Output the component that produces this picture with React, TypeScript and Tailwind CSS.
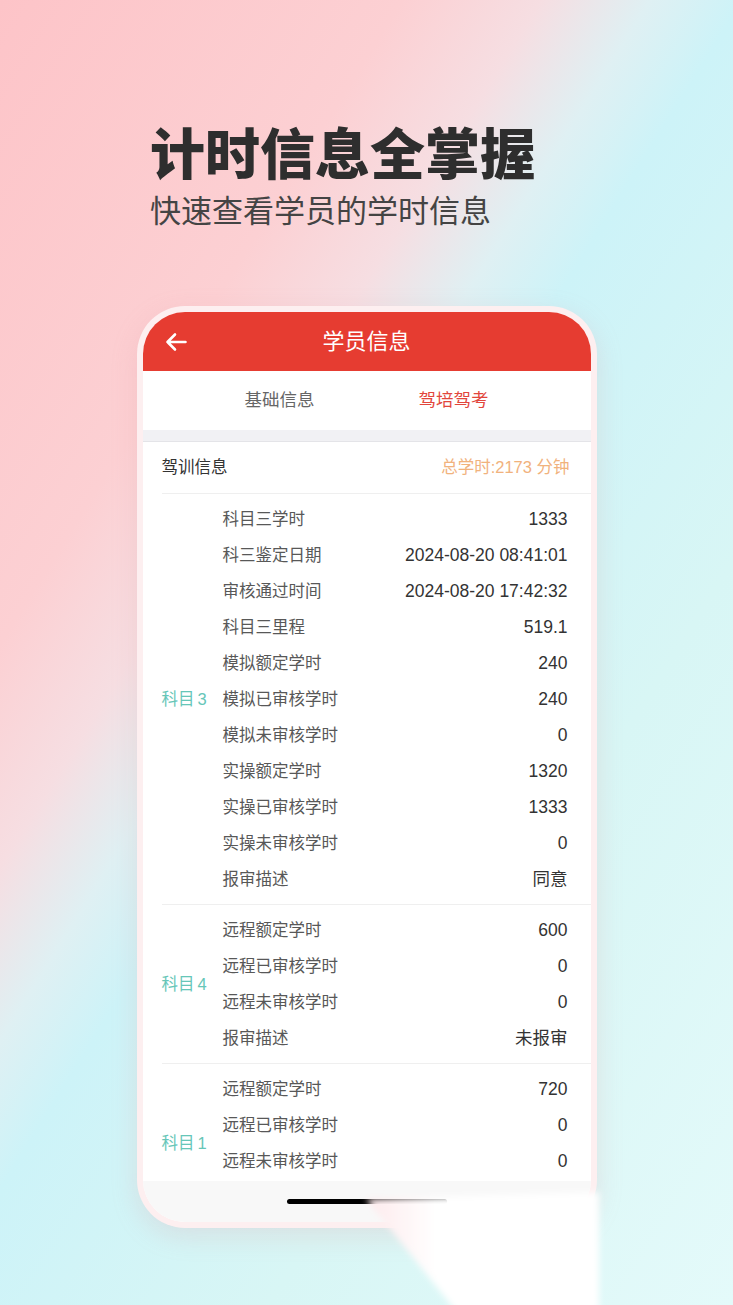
import React from 'react';

type Row = [string, string];

const subject3: Row[] = [
  ['科目三学时', '1333'],
  ['科三鉴定日期', '2024-08-20 08:41:01'],
  ['审核通过时间', '2024-08-20 17:42:32'],
  ['科目三里程', '519.1'],
  ['模拟额定学时', '240'],
  ['模拟已审核学时', '240'],
  ['模拟未审核学时', '0'],
  ['实操额定学时', '1320'],
  ['实操已审核学时', '1333'],
  ['实操未审核学时', '0'],
  ['报审描述', '同意'],
];

const subject4: Row[] = [
  ['远程额定学时', '600'],
  ['远程已审核学时', '0'],
  ['远程未审核学时', '0'],
  ['报审描述', '未报审'],
];

const subject1: Row[] = [
  ['远程额定学时', '720'],
  ['远程已审核学时', '0'],
  ['远程未审核学时', '0'],
];

const Section: React.FC<{ num: string; rows: Row[]; pad?: boolean }> = ({ num, rows, pad }) => (
  <div className="flex border-b border-[#efefef] py-[7px]">
    <div className="flex w-[61px] shrink-0 items-center text-[#66c6b8]">
      科目<span className="ml-[3px]">{num}</span>
    </div>
    <div className="flex-1 pr-[23px]">
      {rows.map(([k, v], i) => (
        <div key={i} className="flex h-[36px] items-center justify-between">
          <span className="text-[#585858]">{k}</span>
          <span className="text-[17.5px] text-[#333]">{v}</span>
        </div>
      ))}
      {pad && <div className="h-[36px]" />}
    </div>
  </div>
);

const App: React.FC = () => {
  return (
    <div className="relative h-[1305px] w-[733px] overflow-hidden bg-[linear-gradient(122deg,#fdc4c8_0%,#fcd0d3_26%,#f6dee2_35%,#dff0f3_42%,#cdf3f8_48%,#d8f6f5_70%,#e4fafa_100%)] font-['Liberation_Sans','Noto_Sans_CJK_SC',sans-serif]">
      <div className="pl-[150px] pt-[123px] font-['Noto_Sans_CJK_SC',sans-serif]">
        <h1 className="text-[55px] font-black leading-none text-[#2e2e2e]">计时信息全掌握</h1>
        <p className="mt-[15px] text-[31px] leading-none text-[#444]">快速查看学员的学时信息</p>
      </div>

      <div className="mx-auto mt-[82px] w-[460px] rounded-[48px] bg-[#fdeff0] p-[6px] shadow-[0_8px_26px_rgba(225,150,160,0.22)]">
        <div className="overflow-hidden rounded-[42px] bg-white text-[16.5px]">
          <div className="relative flex h-[59px] items-center justify-center bg-[#e63c31]">
            <svg className="absolute left-[22px] top-[20px]" width="22" height="20" viewBox="0 0 22 20" fill="none">
              <path d="M20.5 10H2.5M10 2.5L2.5 10L10 17.5" stroke="white" strokeWidth="2.6" strokeLinecap="round" strokeLinejoin="round" />
            </svg>
            <span className="text-[22px] text-white">学员信息</span>
          </div>

          <div className="grid h-[59px] grid-cols-2 items-center px-[50px] text-center text-[17.5px]">
            <span className="text-[#666]">基础信息</span>
            <span className="text-[#e2463c]">驾培驾考</span>
          </div>

          <div className="h-[12px] border-b border-[#e4e4e8] bg-[#f1f1f4]" />

          <div className="h-[739px] overflow-hidden pl-[19px]">
            <div className="flex h-[52px] items-center justify-between border-b border-[#efefef] pr-[21px]">
              <span className="text-[#333]">驾训信息</span>
              <span className="text-[#f1b27d]">总学时:2173 分钟</span>
            </div>
            <Section num="3" rows={subject3} />
            <Section num="4" rows={subject4} />
            <Section num="1" rows={subject1} pad />
          </div>

          <div className="flex h-[41px] items-center justify-center bg-[#f8f8f8]">
            <div className="h-[5px] w-[160px] rounded-full bg-black" />
          </div>
        </div>
      </div>

      <svg className="pointer-events-none absolute left-0 top-0" width="733" height="1305" viewBox="0 0 733 1305">
        <defs>
          <filter id="soft" x="-20%" y="-20%" width="140%" height="140%">
            <feGaussianBlur stdDeviation="3" />
          </filter>
          <linearGradient id="wedge" x1="0" y1="0" x2="1" y2="0">
            <stop offset="0" stopColor="#fdeaec" />
            <stop offset="0.3" stopColor="#ffffff" />
            <stop offset="1" stopColor="#ffffff" />
          </linearGradient>
        </defs>
        <polygon points="366,1199 599,1192 599,1310 455,1310" fill="url(#wedge)" filter="url(#soft)" />
      </svg>
    </div>
  );
};

export default App;
